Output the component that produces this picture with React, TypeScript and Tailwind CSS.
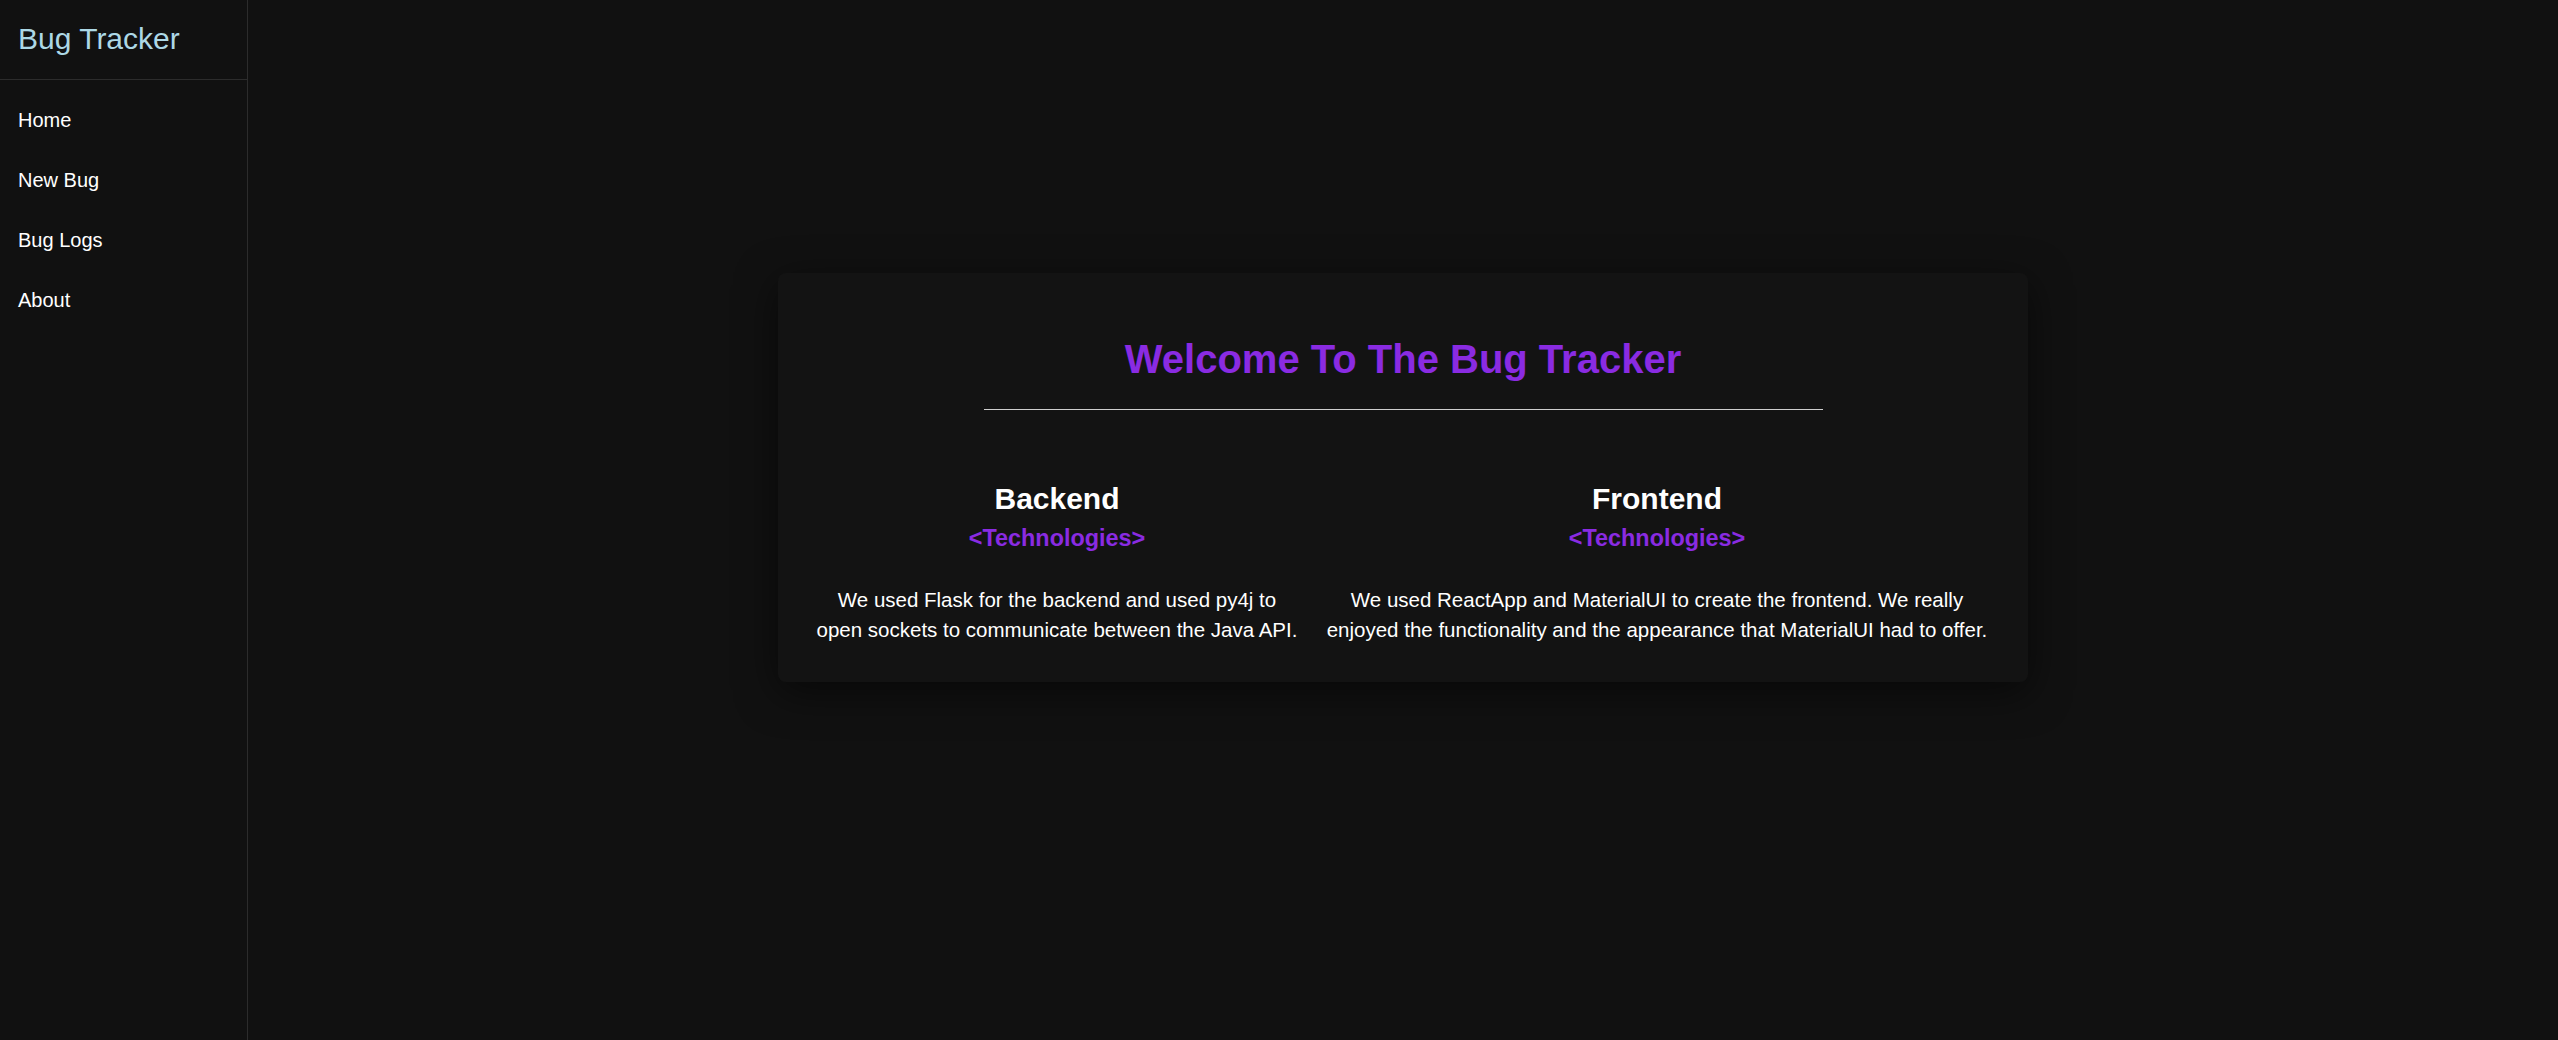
import React from 'react';

type Section = {
  title: string;
  text: string;
  width: string;
};

const navItems = ['Home', 'New Bug', 'Bug Logs', 'About'];

const sections: Section[] = [
  {
    title: 'Backend',
    text: 'We used Flask for the backend and used py4j to open sockets to communicate between the Java API.',
    width: 'w-[486px]',
  },
  {
    title: 'Frontend',
    text: 'We used ReactApp and MaterialUI to create the frontend. We really enjoyed the functionality and the appearance that MaterialUI had to offer.',
    width: 'w-[670px]',
  },
];

const Sidebar: React.FC = () => (
  <aside className="w-[248px] h-screen shrink-0 border-r border-[#2c2c2c] bg-[#111111]">
    <div className="h-[80px] flex items-center pl-[18px] pb-[2px] border-b border-[#2c2c2c]">
      <h1 className="text-[30px] text-[#add8e6]">Bug Tracker</h1>
    </div>
    <nav className="pt-[10px]">
      {navItems.map((item) => (
        <a key={item} href="#" className="h-[60px] flex items-center pl-[18px] text-[20px] text-white">
          {item}
        </a>
      ))}
    </nav>
  </aside>
);

const App: React.FC = () => {
  return (
    <div className="flex min-h-screen bg-[#111111] font-['Liberation_Sans',Arial,sans-serif]">
      <Sidebar />

      {/* Main content */}
      <main className="flex-1 pt-[273px]">
        <div className="mx-auto w-[1250px] rounded-lg bg-[#131313] shadow-[0_10px_40px_rgba(0,0,0,0.55)] px-9 pt-[62px] pb-[37px]">
          <h2 className="text-center text-[40px] leading-[48px] font-bold text-[#8a2be2]">
            Welcome To The Bug Tracker
          </h2>
          <div className="mx-auto mt-[26px] w-[839px] h-px bg-[#cfcfcf]" />

          <div className="mt-[71px] flex gap-[22px]">
            {sections.map((s) => (
              <div key={s.title} className={`${s.width} text-center`}>
                <h3 className="text-[30px] leading-[36px] font-bold text-white">{s.title}</h3>
                <p className="mt-[7px] text-[23.4px] leading-[28px] font-bold text-[#8a2be2]">
                  &lt;Technologies&gt;
                </p>
                <p className="mt-[33px] text-[20.5px] leading-[30px] text-white">{s.text}</p>
              </div>
            ))}
          </div>
        </div>
      </main>
    </div>
  );
};

export default App;
